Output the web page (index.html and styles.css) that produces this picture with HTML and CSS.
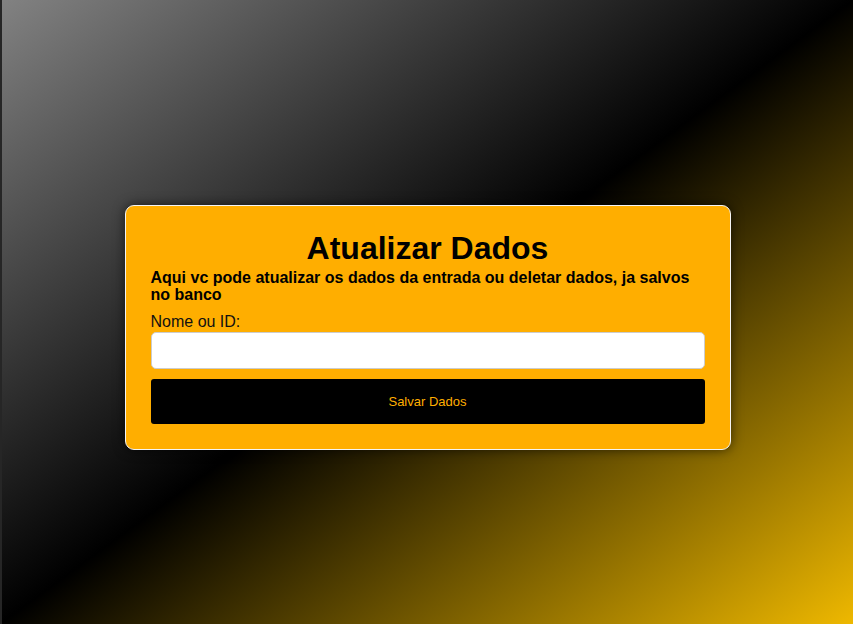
FILE: index.html
```html
<!DOCTYPE html>
<html lang="pt-BR">
<head>
<meta charset="utf-8">
<title>Atualizar Dados</title>
<link rel="stylesheet" href="styles.css">
</head>
<body>
<div class="edge"></div>
<main class="page">
  <form class="card">
    <h1 class="title">Atualizar Dados</h1>
    <p class="desc">Aqui vc pode atualizar os dados da entrada ou deletar dados, ja salvos no banco</p>
    <label class="label" for="nome">Nome ou ID:</label>
    <input class="field" id="nome" type="text">
    <button class="btn" type="button">Salvar Dados</button>
  </form>
</main>
</body>
</html>
```
FILE: styles.css
```css
html, body {
  margin: 0;
  height: 100%;
}
body {
  display: flex;
  font-family: "Liberation Sans", Arial, sans-serif;
  background: linear-gradient(to bottom right, #828282 0%, #000000 50%, #eeb800 100%);
}
.edge {
  width: 2px;
  background: #262626;
  flex: none;
}
.page {
  flex: 1;
  display: flex;
  align-items: center;
  justify-content: center;
  padding-top: 31px;
}
.card {
  width: 554px;
  padding: 24px 25px 25px;
  background: #ffae00;
  border: 1px solid #f4f4f4;
  border-radius: 9px;
  box-shadow: 0 0 12px rgba(0, 0, 0, 0.6);
  display: flex;
  flex-direction: column;
}
.title {
  margin: 0;
  font-size: 32px;
  font-weight: bold;
  text-align: center;
  color: #000;
}
.desc {
  margin: 2px 0 0;
  font-size: 16px;
  font-weight: bold;
  line-height: 17px;
  color: #000;
}
.label {
  margin-top: 10px;
  font-size: 16px;
  color: #111;
}
.field {
  margin: 1px 0 0;
  height: 37px;
  box-sizing: border-box;
  border: 1px solid #cccccc;
  border-radius: 5px;
  background: #fff;
  padding: 0 8px;
  font-size: 16px;
}
.btn {
  margin-top: 10px;
  height: 45px;
  border: none;
  border-radius: 3px;
  background: #000;
  color: #ffae00;
  font-family: "Liberation Sans", Arial, sans-serif;
  font-size: 13px;
}
```
